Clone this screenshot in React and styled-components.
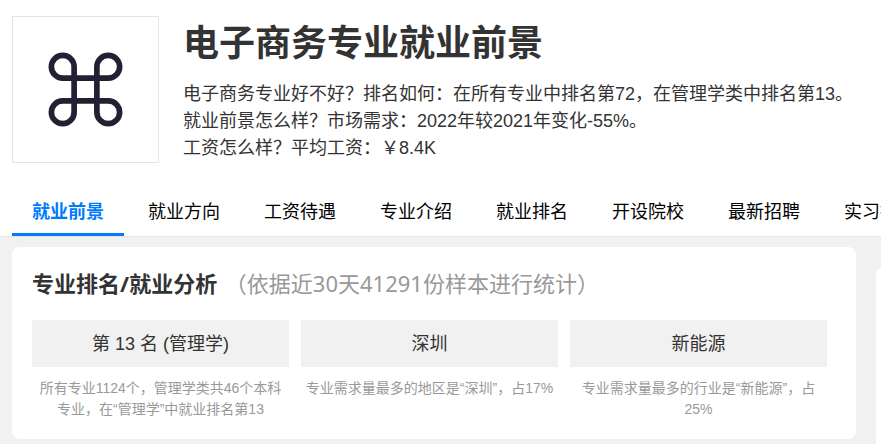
import styled, { createGlobalStyle } from 'styled-components';
import { Command } from 'lucide-react';

const GlobalStyle = createGlobalStyle`
  * {
    box-sizing: border-box;
  }

  body,
  h1,
  h2,
  p,
  ul {
    margin: 0;
    padding: 0;
  }

  body {
    background: #f1f1f1;
    color: #333;
    font-family: 'Liberation Sans', 'Noto Sans CJK SC', sans-serif;
  }
`;

const PageBlock = styled.div`
  display: flex;
  flex-direction: column;
  min-height: 100vh;
  overflow: hidden;
`;

const HeaderBlock = styled.header`
  background: #fff;
  border-bottom: 1px solid #e5e5e5;
`;

const MajorBlock = styled.div`
  display: flex;
  gap: 24px;
  padding: 16px 12px 25px;

  .logo {
    display: flex;
    flex: none;
    align-items: center;
    justify-content: center;
    width: 147px;
    height: 147px;
    padding: 0 1px 1px 0;
    border: 1px solid #e5e5e5;
    color: #222033;
  }

  h1 {
    margin-bottom: 9px;
    font-size: 36px;
    line-height: 56px;
  }

  p {
    font-size: 18px;
    line-height: 27px;
  }
`;

const TabList = styled.ul`
  display: flex;
  gap: 4px;
  padding-left: 12px;
  list-style: none;
`;

const TabLink = styled.a`
  display: block;
  height: 48px;
  padding: 0 20px;
  border-bottom: 3px solid ${({ $active }) => ($active ? '#007bff' : 'transparent')};
  color: ${({ $active }) => ($active ? '#007bff' : '#000')};
  font-size: 18px;
  font-weight: ${({ $active }) => ($active ? 700 : 400)};
  line-height: 49px;
  text-decoration: none;
  white-space: nowrap;
`;

const ContentBlock = styled.main`
  display: flex;
  flex: 1;
  gap: 20px;
  padding: 10px 0 0 12px;
`;

const AnalysisCard = styled.section`
  flex: 1;
  align-self: flex-start;
  min-width: 0;
  margin-bottom: 5px;
  padding: 20px 29px 19px 20px;
  border-radius: 8px;
  background: #fff;

  h2 {
    margin-bottom: 20px;
    font-family: 'Noto Sans', 'Noto Sans CJK SC', sans-serif;
    font-size: 22px;
    line-height: 33px;
  }

  .sample {
    margin-left: 2px;
    color: #999;
    font-weight: 400;
  }
`;

// only its left edge reaches into a narrow window
const SideCard = styled.aside`
  flex: 0 0 300px;
  margin: 20px -295px 0 0;
  border-radius: 8px 8px 0 0;
  background: #fff;
`;

const StatList = styled.div`
  display: grid;
  grid-template-columns: repeat(3, minmax(0, 1fr));
  gap: 12px;
`;

const StatBlock = styled.div`
  text-align: center;

  .value {
    height: 47px;
    background: #f1f1f1;
    font-size: 18px;
    line-height: 49px;
  }

  .des {
    margin-top: 11px;
    padding: 0 4px;
    color: #999;
    font-size: 14px;
    line-height: 21px;
  }
`;

const tabs = ['就业前景', '就业方向', '工资待遇', '专业介绍', '就业排名', '开设院校', '最新招聘', '实习招聘'];

const stats = [
  { value: '第 13 名 (管理学)', des: '所有专业1124个，管理学类共46个本科专业，在“管理学”中就业排名第13' },
  { value: '深圳', des: '专业需求量最多的地区是“深圳”，占17%' },
  { value: '新能源', des: '专业需求量最多的行业是“新能源”，占25%' },
];

const Stat = ({ value, des }) => {
  return (
    <StatBlock>
      <p className='value'>{value}</p>
      <p className='des'>{des}</p>
    </StatBlock>
  );
};

const App = () => {
  return (
    <PageBlock lang='zh-CN'>
      <GlobalStyle />
      <HeaderBlock>
        <MajorBlock>
          <div className='logo'>
            <Command size={91} strokeWidth={1.5} />
          </div>
          <div>
            <h1>电子商务专业就业前景</h1>
            <p>电子商务专业好不好？排名如何：在所有专业中排名第72，在管理学类中排名第13。</p>
            <p>就业前景怎么样？市场需求：2022年较2021年变化-55%。</p>
            <p>工资怎么样？平均工资：￥8.4K</p>
          </div>
        </MajorBlock>
        <nav>
          <TabList>
            {tabs.map((tab, i) => (
              <li key={tab}>
                <TabLink href='#' $active={i === 0}>
                  {tab}
                </TabLink>
              </li>
            ))}
          </TabList>
        </nav>
      </HeaderBlock>
      <ContentBlock>
        <AnalysisCard>
          <h2>
            专业排名/就业分析 <span className='sample'>（依据近30天41291份样本进行统计）</span>
          </h2>
          <StatList>
            {stats.map((stat) => (
              <Stat key={stat.value} {...stat} />
            ))}
          </StatList>
        </AnalysisCard>
        <SideCard />
      </ContentBlock>
    </PageBlock>
  );
};

export default App;
